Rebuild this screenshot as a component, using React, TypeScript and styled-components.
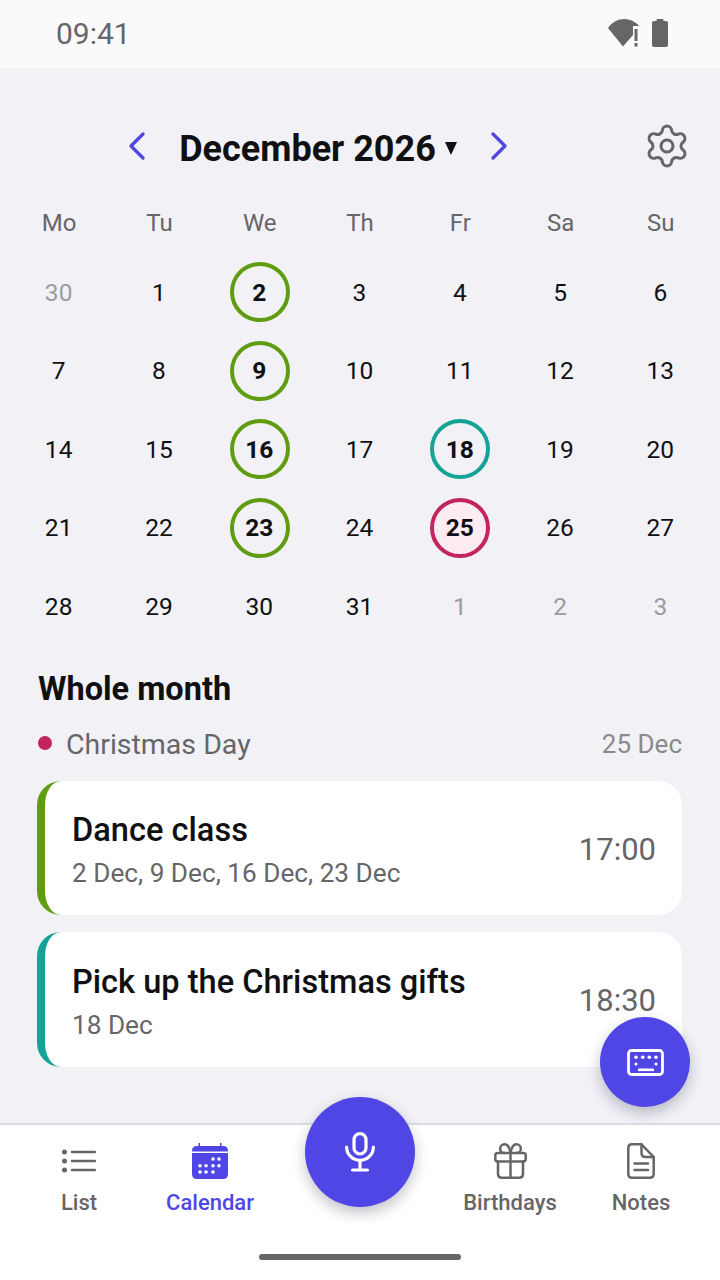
import { FC } from 'react';
import styled, { createGlobalStyle } from 'styled-components';
import { Settings } from 'lucide-react';

const accent = '#4f46e5';
const grey = '#666668';
const ink = '#101012';

const GlobalStyle = createGlobalStyle`
  html, body {
    margin: 0;
    padding: 0;
    background: #f1f1f6;
    font-family: Roboto, "Liberation Sans", sans-serif;
  }
  * { box-sizing: border-box; }
`;

const Screen = styled.div`
  position: relative;
  display: flex;
  flex-direction: column;
  width: 720px;
  height: 1280px;
  overflow: hidden;
  background: #f1f1f6;
`;

const StatusBar = styled.div`
  display: flex;
  align-items: center;
  justify-content: space-between;
  height: 68px;
  padding: 0 52px 2px 56px;
  background: #fafafa;
  color: ${grey};
  font-size: 30px;
`;

const StatusIcons = styled.div`
  display: flex;
  align-items: center;
  gap: 12px;
`;

const Main = styled.main`
  flex: 1;
  display: flex;
  flex-direction: column;
`;

const MonthHeader = styled.div`
  position: relative;
  display: flex;
  align-items: center;
  justify-content: center;
  gap: 33px;
  height: 60px;
  margin-top: 49px;
  padding-right: 84px;
`;

const MonthButton = styled.span`
  display: flex;
  margin-bottom: 2px;
`;

const MonthLabel = styled.div`
  display: flex;
  align-items: center;
  gap: 9px;
  padding-top: 3px;
  font-size: 36px;
  font-weight: 700;
  color: ${ink};
`;

const Caret = styled.span`
  width: 0;
  height: 0;
  border-left: 6.5px solid transparent;
  border-right: 6.5px solid transparent;
  border-top: 13px solid ${ink};
`;

const SettingsButton = styled.span`
  position: absolute;
  right: 29px;
  top: 5px;
  display: flex;
  color: ${grey};
`;

const WeekGrid = styled.div`
  display: grid;
  grid-template-columns: repeat(7, 1fr);
  padding: 0 9px;
  margin-top: 30px;
`;

const WeekDay = styled.div`
  text-align: center;
  font-size: 24px;
  line-height: 32px;
  color: ${grey};
`;

const DayGrid = styled.div`
  display: grid;
  grid-template-columns: repeat(7, 1fr);
  grid-auto-rows: 78.5px;
  padding: 0 9px;
  margin-top: 14px;
`;

const DayCell = styled.div`
  display: flex;
  align-items: center;
  justify-content: center;
`;

const DayNumber = styled.span<{ $muted?: boolean; $ring?: string; $fill?: string }>`
  display: flex;
  align-items: center;
  justify-content: center;
  width: 60px;
  height: 60px;
  padding-right: 1px;
  border-radius: 50%;
  font-size: 24.5px;
  color: ${({ $muted }) => ($muted ? '#9c9c9e' : ink)};
  font-weight: ${({ $ring }) => ($ring ? 700 : 400)};
  border: ${({ $ring }) => ($ring ? `4.5px solid ${$ring}` : 'none')};
  background: ${({ $fill }) => $fill ?? 'transparent'};
`;

const Section = styled.section`
  padding: 0 38px 0 37px;
`;

const SectionTitle = styled.h2`
  margin: 23px 0 0 1px;
  font-size: 32.5px;
  line-height: 40px;
  font-weight: 700;
  color: ${ink};
`;

const HolidayRow = styled.div`
  display: flex;
  align-items: center;
  height: 40px;
  margin-top: 16px;
  color: ${grey};
`;

const HolidayDot = styled.span`
  width: 14px;
  height: 14px;
  margin: 0 14px 4px 1px;
  border-radius: 50%;
  background: #c2255c;
`;

const HolidayName = styled.span`
  flex: 1;
  font-size: 28.5px;
`;

const HolidayDate = styled.span`
  margin-bottom: 2px;
  font-size: 26px;
  color: #8a8a8c;
`;

const EventList = styled.div`
  display: flex;
  flex-direction: column;
  gap: 17px;
  margin-top: 16px;
`;

const EventCard = styled.div<{ $color: string }>`
  display: flex;
  align-items: center;
  justify-content: space-between;
  height: 134.5px;
  padding: 0 26px 0 27px;
  background: #fff;
  border-left: 8px solid ${({ $color }) => $color};
  border-radius: 24px;
`;

const EventText = styled.div`
  padding-top: 5px;
`;

const EventTitle = styled.div`
  font-size: 32.6px;
  line-height: 40px;
  font-weight: 500;
  color: ${ink};
`;

const EventDates = styled.div`
  margin-top: 6px;
  font-size: 26.2px;
  line-height: 34px;
  color: ${grey};
`;

const EventTime = styled.div`
  padding-top: 3px;
  font-size: 31px;
  color: ${grey};
`;

const BottomNav = styled.nav`
  display: grid;
  grid-template-columns: 158px 104px 196px 104px 158px;
  height: 157px;
  flex-shrink: 0;
  background: #fff;
  border-top: 2px solid #dcdce2;
`;

const NavItem = styled.div<{ $active?: boolean }>`
  display: flex;
  flex-direction: column;
  align-items: center;
  padding-top: 17px;
  font-size: 22px;
  font-weight: 500;
  white-space: nowrap;
  color: ${({ $active }) => ($active ? accent : grey)};
`;

const NavIcon = styled.span`
  display: flex;
  align-items: center;
  height: 38px;
  margin-bottom: 10px;
`;

const Fab = styled.button<{ $size: number }>`
  position: absolute;
  display: flex;
  align-items: center;
  justify-content: center;
  width: ${({ $size }) => $size}px;
  height: ${({ $size }) => $size}px;
  padding: 0;
  border: none;
  border-radius: 50%;
  color: #fff;
  background: ${accent};
  box-shadow: 0 6px 14px rgba(40, 40, 60, 0.28);
`;

const MicFab = styled(Fab)`
  left: 305px;
  top: 1097px;
`;

const KeyboardFab = styled(Fab)`
  left: 600px;
  top: 1017px;
`;

const HomeBar = styled.div`
  position: absolute;
  left: 259px;
  top: 1254px;
  width: 202px;
  height: 6px;
  border-radius: 3px;
  background: #666;
`;

const Chevron: FC<{ flip?: boolean }> = ({ flip }) => (
  <svg width="18" height="28" viewBox="0 0 18 28" fill="none">
    <path
      d={flip ? 'M3 2 L15 14 L3 26' : 'M15 2 L3 14 L15 26'}
      stroke={accent}
      strokeWidth="3.200"
      strokeLinecap="round"
      strokeLinejoin="round"
    />
  </svg>
);

const WifiIcon = () => (
  <svg width="32" height="28" viewBox="0 0 32 28">
    <path d="M0 9 C8 -2 22 -3 31.500 7 L25 7 L25 16 L15 27.500 Z" fill={grey} />
    <rect x="26.500" y="10" width="3" height="12" fill={grey} />
    <rect x="26.500" y="24" width="3" height="3.500" fill={grey} />
  </svg>
);

const BatteryIcon = () => (
  <svg width="16" height="28" viewBox="0 0 16 28">
    <path
      d="M4.500 1 Q4.500 0 5.500 0 L10.500 0 Q11.500 0 11.500 1 L11.500 2 L14 2 Q16 2 16 4 L16 26 Q16 28 14 28 L2 28 Q0 28 0 26 L0 4 Q0 2 2 2 L4.500 2 Z"
      fill={grey}
    />
  </svg>
);

const ListIcon = () => (
  <svg width="34" height="24" viewBox="0 0 34 24" fill="none" stroke={grey} strokeWidth="2.500">
    <circle cx="2.500" cy="3" r="2.500" fill={grey} stroke="none" />
    <circle cx="2.500" cy="12" r="2.500" fill={grey} stroke="none" />
    <circle cx="2.500" cy="21" r="2.500" fill={grey} stroke="none" />
    <path d="M10 3 H33 M10 12 H33 M10 21 H33" strokeLinecap="round" />
  </svg>
);

const calendarDots = [
  [21, 16], [27, 16],
  [8, 22.700], [14, 22.700], [21, 22.700], [27, 22.700],
  [8, 29], [14, 29], [21, 29],
];

const CalendarIcon = () => (
  <svg width="36" height="36" viewBox="0 0 36 36">
    <path
      d="M6.500 0 H8 V3 H28 V0 H29.500 V3 H31 Q36 3 36 8 V8.500 H0 V8 Q0 3 5 3 H6.500 Z M0 10 H36 V31 Q36 36 31 36 H5 Q0 36 0 31 Z"
      fill={accent}
    />
    {calendarDots.map(([x, y]) => (
      <circle key={`${x}-${y}`} cx={x} cy={y} r="1.800" fill="#fff" />
    ))}
  </svg>
);

const GiftIcon = () => (
  <svg width="33" height="36" viewBox="0 0 33 36" fill="none" stroke={grey} strokeWidth="2.500" strokeLinejoin="round" strokeLinecap="round">
    <rect x="1.300" y="10" width="30.400" height="8.500" rx="2.500" />
    <path d="M4 18.500 V31 Q4 34.700 7.700 34.700 H25.300 Q29 34.700 29 31 V18.500" />
    <path d="M16.500 10 V34.700" />
    <path d="M16.500 10 C15.500 4 13.500 1.300 10.500 1.300 A4.350 4.350 0 0 0 10.500 10" />
    <path d="M16.500 10 C17.500 4 19.500 1.300 22.500 1.300 A4.350 4.350 0 0 1 22.500 10" />
  </svg>
);

const NotesIcon = () => (
  <svg width="28" height="36" viewBox="0 0 28 36" fill="none" stroke={grey} strokeWidth="2.500" strokeLinejoin="round" strokeLinecap="round">
    <path d="M5 1.300 H14.500 L26.700 14 V30.700 Q26.700 34.700 22.700 34.700 H5 Q1.300 34.700 1.300 30.700 V5 Q1.300 1.300 5 1.300 Z" />
    <path d="M14.500 1.300 V10 Q14.500 14 18.500 14 H26.700" />
    <path d="M7.500 20.500 H21 M7.500 27 H21" />
  </svg>
);

const MicIcon = () => (
  <svg width="30" height="40" viewBox="0 0 30 40" fill="none" stroke="#fff" strokeWidth="3.200" strokeLinecap="round">
    <rect x="9" y="1.600" width="12" height="20.400" rx="6" />
    <path d="M1.600 15 A13.400 13.400 0 0 0 28.400 15" />
    <path d="M15 29 V38 M7.500 38 H22.500" />
  </svg>
);

const KeyboardIcon = () => (
  <svg width="37" height="27" viewBox="0 0 37 27" fill="none">
    <rect x="1.500" y="1.500" width="34" height="24" rx="3" stroke="#fff" strokeWidth="2.800" />
    {[9, 15.700, 22.300, 29].map(x => (
      <circle key={x} cx={x} cy="8.300" r="1.800" fill="#fff" />
    ))}
    <circle cx="9" cy="15" r="1.600" fill="#fff" />
    <circle cx="29" cy="15" r="1.600" fill="#fff" />
    <rect x="11" y="19.500" width="16" height="2.600" fill="#fff" />
  </svg>
);

const weekdays = ['Mo', 'Tu', 'We', 'Th', 'Fr', 'Sa', 'Su'];

type Day = { n: number; muted?: boolean; ring?: string; fill?: string };

const green = '#5f9c0f';
const teal = '#14a394';
const crimson = '#c2255c';

const marks: Record<number, Pick<Day, 'ring' | 'fill'>> = {
  2: { ring: green },
  9: { ring: green },
  16: { ring: green },
  23: { ring: green },
  18: { ring: teal },
  25: { ring: crimson, fill: '#fdebf2' },
};
const days: Day[] = [
  { n: 30, muted: true },
  ...Array.from({ length: 31 }, (_, i) => ({ n: i + 1, ...marks[i + 1] })),
  { n: 1, muted: true },
  { n: 2, muted: true },
  { n: 3, muted: true },
];

const events = [
  { title: 'Dance class', dates: '2 Dec, 9 Dec, 16 Dec, 23 Dec', time: '17:00', color: green },
  { title: 'Pick up the Christmas gifts', dates: '18 Dec', time: '18:30', color: teal },
];

export default function App() {
  return (
    <Screen>
      <GlobalStyle />
      <StatusBar>
        <span>09:41</span>
        <StatusIcons>
          <WifiIcon />
          <BatteryIcon />
        </StatusIcons>
      </StatusBar>
      <Main>
        <MonthHeader>
          <MonthButton><Chevron /></MonthButton>
          <MonthLabel>
            December 2026
            <Caret />
          </MonthLabel>
          <MonthButton><Chevron flip /></MonthButton>
          <SettingsButton>
            <Settings size={48} strokeWidth={1.500} />
          </SettingsButton>
        </MonthHeader>
        <WeekGrid>
          {weekdays.map(d => (
            <WeekDay key={d}>{d}</WeekDay>
          ))}
        </WeekGrid>
        <DayGrid>
          {days.map((d, i) => (
            <DayCell key={i}>
              <DayNumber $muted={d.muted} $ring={d.ring} $fill={d.fill}>{d.n}</DayNumber>
            </DayCell>
          ))}
        </DayGrid>
        <Section>
          <SectionTitle>Whole month</SectionTitle>
          <HolidayRow>
            <HolidayDot />
            <HolidayName>Christmas Day</HolidayName>
            <HolidayDate>25 Dec</HolidayDate>
          </HolidayRow>
          <EventList>
            {events.map(e => (
              <EventCard key={e.title} $color={e.color}>
                <EventText>
                  <EventTitle>{e.title}</EventTitle>
                  <EventDates>{e.dates}</EventDates>
                </EventText>
                <EventTime>{e.time}</EventTime>
              </EventCard>
            ))}
          </EventList>
        </Section>
      </Main>
      <BottomNav>
        <NavItem>
          <NavIcon><ListIcon /></NavIcon>
          List
        </NavItem>
        <NavItem $active>
          <NavIcon><CalendarIcon /></NavIcon>
          Calendar
        </NavItem>
        <span />
        <NavItem>
          <NavIcon><GiftIcon /></NavIcon>
          Birthdays
        </NavItem>
        <NavItem>
          <NavIcon><NotesIcon /></NavIcon>
          Notes
        </NavItem>
      </BottomNav>
      <MicFab $size={110}>
        <MicIcon />
      </MicFab>
      <KeyboardFab $size={90}>
        <KeyboardIcon />
      </KeyboardFab>
      <HomeBar />
    </Screen>
  );
}
